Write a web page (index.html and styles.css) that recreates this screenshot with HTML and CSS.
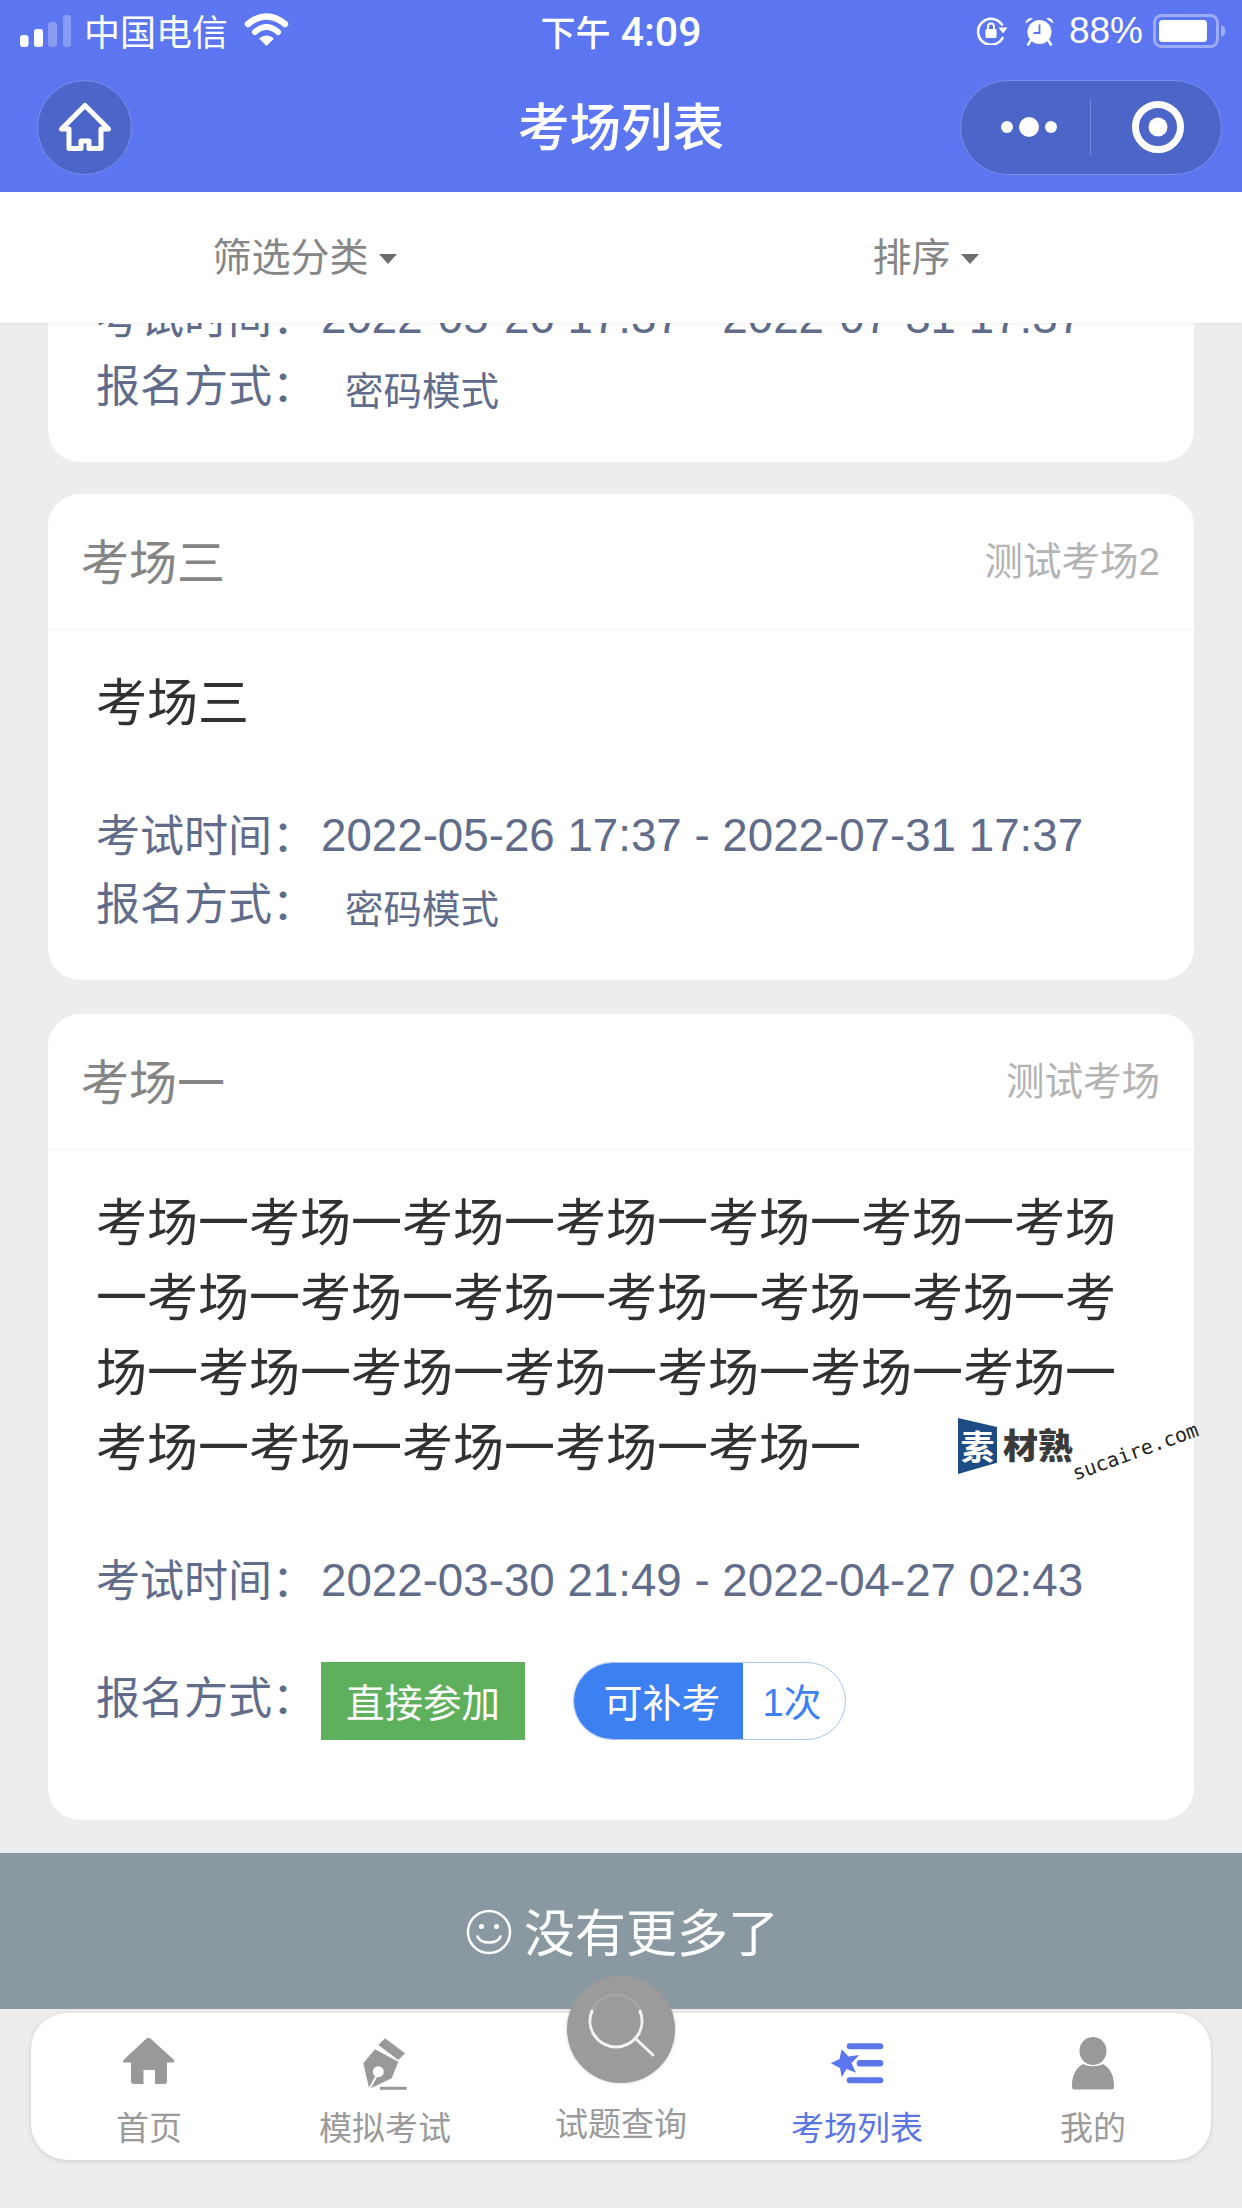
FILE: index.html
```html
<!DOCTYPE html>
<html lang="zh-CN">
<head>
<meta charset="utf-8">
<title>考场列表</title>
<link rel="stylesheet" href="styles.css">
</head>
<body>
<div class="page">
  <header class="top">
    <div class="status">
      <div class="status-left">
        <svg class="signal" width="51" height="32" viewBox="0 0 51 32">
          <rect x="0" y="20" width="8.500" height="12" rx="3" fill="#fff"/>
          <rect x="14" y="14" width="9" height="18" rx="3" fill="#fff"/>
          <rect x="28" y="7" width="9" height="25" rx="3" fill="#fff" opacity=".28"/>
          <rect x="43" y="0" width="8" height="32" rx="3" fill="#fff" opacity=".28"/>
        </svg>
        <span class="carrier">中国电信</span>
        <svg class="wifi" width="45" height="33" viewBox="0 0 45 33">
          <path d="M22.500 33 15 25.500Q22.500 19.500 30 25.500Z" fill="#fff"/>
          <path d="M4 11Q22.500-4 41 11" fill="none" stroke="#fff" stroke-width="6.500" stroke-linecap="round"/>
          <path d="M11 19Q22.500 9 34 19" fill="none" stroke="#fff" stroke-width="6" stroke-linecap="round"/>
        </svg>
      </div>
      <div class="clock"><span class="clock-cn">下午</span> 4:09</div>
      <div class="status-right">
        <svg class="lock" width="32" height="28" viewBox="0 0 32 28">
          <path d="M26.500 8.500A13 13 0 1 0 27 20" fill="none" stroke="#fff" stroke-width="2.500"/>
          <path d="M22.500 10.500h9l-4.500 6Z" fill="#fff"/>
          <rect x="9.500" y="12" width="11" height="9" rx="1.500" fill="#fff"/>
          <path d="M12 12V9.500a3 3 0 0 1 6 0V12" fill="none" stroke="#fff" stroke-width="2"/>
        </svg>
        <svg class="alarm" width="29" height="29" viewBox="0 0 29 29">
          <circle cx="14.500" cy="15" r="12" fill="#fff"/>
          <path d="M.5 6.500A5.500 5.500 0 0 1 8 1.500ZM28.500 6.500A5.500 5.500 0 0 0 21 1.500Z" fill="#fff"/>
          <path d="M6 23 2.500 28.500M23 23l3.500 5.500" stroke="#fff" stroke-width="2.500"/>
          <path d="M14.500 7.500v8.500h-6" fill="none" stroke="#5b76f0" stroke-width="1.800"/>
        </svg>
        <span class="percent">88%</span>
        <svg class="battery" width="73" height="34" viewBox="0 0 73 34">
          <rect x="1.500" y="1.500" width="63" height="31" rx="7" fill="none" stroke="#fff" stroke-opacity=".4" stroke-width="3"/>
          <rect x="6" y="6" width="48" height="22" rx="3.500" fill="#fff"/>
          <path d="M68 11c3 1 4.500 3.500 4.500 6s-1.500 5-4.500 6Z" fill="#fff" fill-opacity=".4"/>
        </svg>
      </div>
    </div>
    <nav class="navbar">
      <div class="nav-left">
        <div class="home-btn">
          <svg width="54" height="50" viewBox="0 0 54 50">
            <path d="M27 3.500 3.500 27H11V46.500H23V39h8V46.500H43V27H50.500Z" fill="none" stroke="#fff" stroke-width="5" stroke-linejoin="round"/>
          </svg>
        </div>
      </div>
      <h1 class="nav-title">考场列表</h1>
      <div class="nav-right">
        <div class="capsule">
          <div class="capsule-side capsule-more">
            <svg width="56" height="22" viewBox="0 0 56 22"><circle cx="6" cy="11" r="6" fill="#fff"/><circle cx="28" cy="11" r="10" fill="#fff"/><circle cx="50" cy="11" r="6" fill="#fff"/></svg>
          </div>
          <div class="capsule-side capsule-close">
            <svg width="52" height="52" viewBox="0 0 52 52"><circle cx="26" cy="26" r="22.500" fill="none" stroke="#fff" stroke-width="7"/><circle cx="26" cy="26" r="9.500" fill="#fff"/></svg>
          </div>
        </div>
      </div>
    </nav>
  </header>

  <div class="filters">
    <div class="filter">筛选分类<i class="caret"></i></div>
    <div class="filter">排序<i class="caret"></i></div>
  </div>

  <main class="list">
    <div class="list-inner">
      <article class="card card-clipped">
        <div class="card-body">
          <div class="row row-time"><span class="label">考试时间：</span><span class="date">2022-05-26 17:37 - 2022-07-31 17:37</span></div>
          <div class="row row-sign"><span class="label">报名方式：</span><span class="mode">密码模式</span></div>
        </div>
      </article>
      <article class="card">
        <div class="card-head"><span class="card-name">考场三</span><span class="card-sub">测试考场2</span></div>
        <div class="card-body">
          <div class="card-title">考场三</div>
          <div class="row row-time"><span class="label">考试时间：</span><span class="date">2022-05-26 17:37 - 2022-07-31 17:37</span></div>
          <div class="row row-sign"><span class="label">报名方式：</span><span class="mode">密码模式</span></div>
        </div>
      </article>
      <article class="card card-long">
        <div class="card-head"><span class="card-name">考场一</span><span class="card-sub">测试考场</span></div>
        <div class="card-body">
          <div class="card-title">考场一考场一考场一考场一考场一考场一考场一考场一考场一考场一考场一考场一考场一考场一考场一考场一考场一考场一考场一考场一考场一考场一考场一考场一考场一</div>
          <div class="row row-time"><span class="label">考试时间：</span><span class="date">2022-03-30 21:49 - 2022-04-27 02:43</span></div>
          <div class="row row-sign row-tags">
            <span class="label">报名方式：</span>
            <span class="tag-green">直接参加</span>
            <span class="pill"><span class="pill-main">可补考</span><span class="pill-count">1次</span></span>
          </div>
        </div>
        <div class="watermark">
          <span class="wm-box"><span class="wm-su">素</span></span><span class="wm-cn">材熟</span>
          <span class="wm-url">sucaire.com</span>
        </div>
      </article>
    </div>
  </main>

  <div class="no-more">
    <svg class="smile" width="46" height="46" viewBox="0 0 46 46">
      <circle cx="23" cy="23" r="21" fill="none" stroke="#fff" stroke-width="2.500"/>
      <circle cx="15.500" cy="17.500" r="2.500" fill="#fff"/>
      <circle cx="30.500" cy="17.500" r="2.500" fill="#fff"/>
      <path d="M11.500 27.500c3 8 20 8 23 0" fill="none" stroke="#fff" stroke-width="2.500" stroke-linecap="round"/>
    </svg>
    <span>没有更多了</span>
  </div>

  <footer class="tabbar">
    <div class="tab">
      <svg class="tab-icon" width="52" height="54" viewBox="0 0 52 54">
        <path d="M23.500 1.500Q25.500 0 27.500 1.500L50.500 22.500C52 24 51.500 25.500 49.500 25.500H44V44C44 46 43 47 41 47H32V33H20.500V47H11C9 47 8 46 8 44V25.500H2C0 25.500-.5 24 1 22.500Z" fill="#999"/>
      </svg>
      <span>首页</span>
    </div>
    <div class="tab">
      <svg class="tab-icon" width="52" height="54" viewBox="0 0 52 54">
        <path d="M26 1.300 46 16.300 39.300 23 19.300 8Z" fill="#999"/>
        <path d="M16 12.300 39.300 24.700 32.700 41.300 10.300 52 4.300 26.300Z" fill="#999"/>
        <circle cx="19.300" cy="34.700" r="5.500" fill="#fff"/>
        <path d="M18 38 10.300 52" stroke="#fff" stroke-width="2"/>
        <path d="M21 51.300H47.700" stroke="#999" stroke-width="3"/>
      </svg>
      <span>模拟考试</span>
    </div>
    <div class="tab tab-search">
      <span class="tab-spacer"></span>
      <span>试题查询</span>
      <div class="search-btn">
        <svg width="108" height="107" viewBox="0 0 108 107">
          <circle cx="49" cy="45" r="26" fill="none" stroke="#fff" stroke-opacity=".12" stroke-width="3"/>
          <path d="M25.400 34A26 26 0 1 0 72.600 34" fill="none" stroke="#f2f2f2" stroke-width="3"/>
          <path d="M69 63 86 79" stroke="#f2f2f2" stroke-width="3" stroke-linecap="round"/>
        </svg>
      </div>
    </div>
    <div class="tab tab-active">
      <svg class="tab-icon" width="56" height="54" viewBox="0 0 56 54">
        <rect x="17.700" y="6.300" width="36.600" height="6" rx="3" fill="#5b76e8"/>
        <rect x="27.700" y="23" width="26.600" height="6.500" rx="3.250" fill="#5b76e8"/>
        <rect x="17.700" y="40.300" width="36.600" height="6" rx="3" fill="#5b76e8"/>
        <path d="M1.700 26.300 10.500 22 12.700 12.300 19.500 19.500 30.300 18 22.500 26 27 35.700 17.500 32 12.700 40.300 11 31Z" fill="#5b76f0"/>
      </svg>
      <span>考场列表</span>
    </div>
    <div class="tab">
      <svg class="tab-icon" width="46" height="54" viewBox="0 0 46 54">
        <ellipse cx="23" cy="14" rx="13.500" ry="14" fill="#999"/>
        <path d="M13 27c6 3 14 3 20 0 7 4 11 11 11 22 0 3-1 3.500-3 3.500H5c-2 0-3-.5-3-3.500 0-11 4-18 11-22Z" fill="#999"/>
      </svg>
      <span>我的</span>
    </div>
  </footer>
</div>
</body>
</html>
```
FILE: styles.css
```css
* { box-sizing: border-box; }
html, body { margin: 0; padding: 0; }
body {
  width: 1242px;
  height: 2208px;
  overflow: hidden;
  background: #ededed;
  font-family: "Noto Sans CJK SC", "Liberation Sans", sans-serif;
}
.page { display: flex; flex-direction: column; height: 2208px; }

.top { flex: none; height: 192px; background: #5b76f0; color: #fff; }
.status {
  height: 62px;
  padding: 0 16px;
  display: grid;
  grid-template-columns: 1fr auto 1fr;
  align-items: center;
  font-size: 36px;
}
.status-left { display: flex; align-items: center; padding-left: 4px; }
.signal { margin-right: 13px; }
.carrier { line-height: 52px; padding-bottom: 2px; }
.wifi { margin-left: 16px; margin-top: -4px; }
.clock { font-family: Roboto, sans-serif; font-weight: 500; font-size: 41px; line-height: 52px; white-space: nowrap; }
.clock-cn { font-family: "Noto Sans CJK SC", sans-serif; font-size: 35px; }
.status-right { display: flex; align-items: center; justify-content: flex-end; }
.lock { margin-right: 17px; }
.alarm { margin-right: 15px; }
.percent { font-family: "Liberation Sans", sans-serif; font-size: 37px; line-height: 44px; margin-right: 10px; }

.navbar {
  height: 130px;
  padding: 0 20px;
  display: grid;
  grid-template-columns: 1fr auto 1fr;
  align-items: center;
}
.nav-left { display: flex; padding-left: 17px; }
.home-btn {
  width: 95px;
  height: 95px;
  border-radius: 50%;
  background: #4b65c9;
  border: 1px solid #7a90ec;
  display: flex;
  align-items: center;
  justify-content: center;
}
.nav-title { margin: 0; font-size: 51.500px; font-weight: 500; line-height: 76px; padding-bottom: 6px; }
.nav-right { display: flex; justify-content: flex-end; }
.capsule {
  width: 262px;
  height: 95px;
  border-radius: 48px;
  background: #4b65c9;
  border: 1px solid #7a90ec;
  display: grid;
  grid-template-columns: 130px 130px;
}
.capsule-side { display: flex; align-items: center; justify-content: center; }
.capsule-close { padding-left: 3px; }
.capsule-more { position: relative; padding-left: 6px; }
.capsule-more::after {
  content: "";
  position: absolute;
  right: 0;
  top: 18px;
  bottom: 18px;
  width: 1px;
  background: #7088e0;
}

.filters {
  flex: none;
  height: 131px;
  background: #fff;
  display: grid;
  grid-template-columns: 1fr 1fr;
  position: relative;
  z-index: 1;
  box-shadow: 0 1px 2px rgba(0,0,0,.06);
}
.filter {
  display: flex;
  align-items: center;
  justify-content: center;
  color: #868686;
  font-size: 39px;
  padding-bottom: 7px;
  padding-right: 12px;
}
.caret {
  width: 0;
  height: 0;
  margin-left: 10px;
  margin-top: 10px;
  border-left: 9px solid transparent;
  border-right: 9px solid transparent;
  border-top: 10px solid #6e6e6e;
}

.list { flex: none; height: 1530px; overflow: hidden; }
.list-inner { padding: 0 48px; display: flex; flex-direction: column; gap: 32px; }
.card { background: #fff; border-radius: 32px; position: relative; }
.card-clipped { margin-top: -35px; border-radius: 0 0 32px 32px; }
.card-clipped .row-time { margin-top: 0; }
.card-clipped .card-body { padding-top: 0; }
.card-long { margin-top: 2px; }
.card-head {
  height: 136px;
  padding: 0 34px 0 33px;
  display: flex;
  align-items: center;
  justify-content: space-between;
  border-bottom: 1px solid #f6f6f6;
}
.card-name { font-size: 48px; color: #858585; padding-bottom: 6px; }
.card-sub { font-size: 38.500px; color: #b3b3b3; font-family: "Liberation Sans", "Noto Sans CJK SC", sans-serif; padding-bottom: 8px; }
.card-body { padding: 32px 48px 46px; }
.card-title { font-size: 51px; line-height: 75px; color: #303133; width: 1021px; }
.row { display: flex; align-items: center; color: #606c8a; }
.row-time { height: 60px; margin-top: 69px; }
.row-sign { height: 60px; margin-top: 8px; }
.label { flex: none; width: 225px; font-size: 44px; line-height: 60px; padding-bottom: 6px; }
.date { font-family: "Liberation Sans", sans-serif; font-size: 45.700px; white-space: nowrap; }
.mode { font-size: 38.500px; line-height: 50px; padding: 4px 0 0 24px; }

.row-tags { height: 78px; margin-top: 51px; }
.card-long .card-body { padding-bottom: 80px; }
.card-long .row-tags .label { height: 78px; line-height: 66px; }
.tag-green {
  width: 204px;
  height: 78px;
  background: #5fb05c;
  color: #fff;
  font-size: 38.500px;
  padding-bottom: 2px;
  display: flex;
  align-items: center;
  justify-content: center;
}
.pill {
  margin-left: 48px;
  width: 273px;
  height: 78px;
  border-radius: 39px;
  border: 1px solid #a8c6e8;
  display: flex;
  overflow: hidden;
  background: #fff;
}
.pill-main {
  width: 170px;
  margin: -1px 0 -1px -1px;
  background: #3c80f2;
  color: #fff;
  font-size: 39px;
  padding: 0 0 3px 8px;
  display: flex;
  align-items: center;
  justify-content: center;
}
.pill-count {
  flex: 1;
  color: #3c80f2;
  font-size: 38px;
  padding: 0 4px 3px 0;
  display: flex;
  align-items: center;
  justify-content: center;
  font-family: "Liberation Sans", "Noto Sans CJK SC", sans-serif;
}

.watermark { position: absolute; left: 910px; top: 404px; width: 250px; height: 70px; }
.wm-box {
  position: absolute;
  left: 0;
  top: 0;
  width: 39px;
  height: 56px;
  background: #1d4c85;
  clip-path: polygon(0 0, 100% 16%, 100% 80%, 0 100%);
  display: flex;
  align-items: center;
  justify-content: center;
}
.wm-su { color: #fff; font-size: 34px; font-weight: 700; line-height: 36px; }
.wm-cn { position: absolute; left: 45px; top: 4px; font-size: 35px; font-weight: 900; line-height: 44px; color: #3a3a3a; white-space: nowrap; }
.wm-url {
  position: absolute;
  left: 115px;
  top: 44px;
  font-family: "DejaVu Sans Mono", monospace;
  font-size: 20px;
  line-height: 24px;
  color: #222;
  white-space: nowrap;
  transform: rotate(-20deg);
  transform-origin: left center;
}

.no-more {
  flex: none;
  height: 156px;
  background: #8a99a1;
  color: #fff;
  display: flex;
  align-items: center;
  justify-content: center;
  gap: 12px;
  font-size: 51px;
  padding-left: 3px;
}
.smile { margin-top: 1px; }
.no-more span { line-height: 74px; padding-bottom: 3px; }

.tabbar {
  flex: none;
  width: 1180px;
  height: 147px;
  margin: 4px 0 0 31px;
  background: #fff;
  border-radius: 36px;
  box-shadow: 0 1px 5px rgba(0,0,0,.14);
  display: grid;
  grid-template-columns: repeat(5, 1fr);
  position: relative;
}
.tab {
  display: flex;
  flex-direction: column;
  align-items: center;
  padding-top: 24px;
  color: #9a9a9a;
  font-size: 33px;
  position: relative;
}
.tab span { line-height: 46px; padding-bottom: 2px; }
.tab-icon { display: block; height: 54px; margin-bottom: 12px; }
.tab-spacer { display: block; height: 62px; padding: 0; }
.tab-active { color: #5b76e0; }
.search-btn {
  position: absolute;
  left: 64px;
  top: -37px;
  width: 108px;
  height: 107px;
  border-radius: 50%;
  background: #9b9b9b;
  box-shadow: 0 0 3px rgba(155,155,155,.6);
}
.search-btn svg { display: block; }
```
